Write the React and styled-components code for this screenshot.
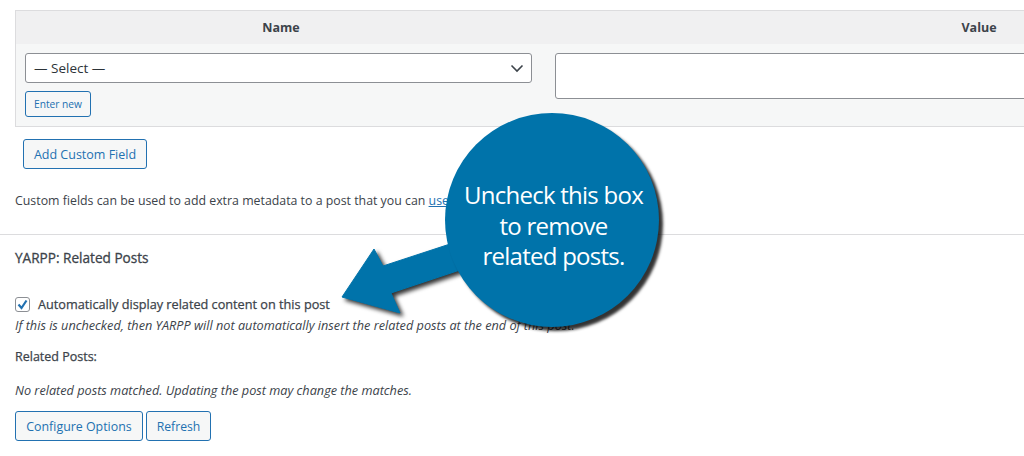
import React from "react";
import styled, { createGlobalStyle } from "styled-components";

const Global = createGlobalStyle`
  html, body { margin: 0; padding: 0; background: #fff; overflow: hidden; }
  body { font-family: "Open Sans", "Liberation Sans", sans-serif; font-size: 12.35px; color: #3c434a; }
`;
const Page = styled.div`
  position: relative; width: 1024px; height: 456px; overflow: hidden; padding-top: 10px; box-sizing: border-box;
`;
const FieldTable = styled.div`
  margin-left: 15px; width: 1400px; height: 117px; box-sizing: border-box; border: 1px solid #dcdcde;
  background: #f6f7f7; display: grid; grid-template-columns: 530px 866px; grid-template-rows: 33px 1fr;
`;
const HeadCell = styled.div`
  background: #f0f0f1; font-weight: 700; font-size: 12.5px; display: flex; align-items: center; justify-content: center; color: #3c434a;
`;
const BodyCell = styled.div`
  padding: 9px 0 0 9px; display: flex; flex-direction: column; align-items: flex-start; gap: 8px;
`;
const SelectBox = styled.div`
  width: 507px; height: 30px; box-sizing: border-box; border: 1px solid #8c8f94; border-radius: 3px; background: #fff;
  display: flex; align-items: center; justify-content: space-between; padding: 0 7px 0 8px; font-size: 13.5px; color: #2c3338;
`;
const ValueBox = styled.div`
  width: 700px; height: 46px; box-sizing: border-box; border: 1px solid #8c8f94; border-radius: 3px; background: #fff;
`;
const Button = styled.button`
  font: inherit; font-size: ${p => p.$fs}px; height: ${p => p.$small ? "26px" : "30px"};
  padding: 0; width: ${p => p.$w}px; box-sizing: border-box; border: 1px solid #2271b1; border-radius: 3px;
  background: #f6f7f7; color: #2271b1; display: flex; align-items: center; justify-content: center; flex: none;
`;
const AddRow = styled.div` margin: 12px 0 0 23px; `;
const Help = styled.p` margin: 23px 0 0 15px; line-height: 18px; `;
const Link = styled.a` color: #2271b1; text-decoration: underline; `;
const Divider = styled.div` height: 1px; background: #dcdcde; margin-top: 24px; `;
const Section = styled.section` padding: 14px 0 0 15px; `;
const Title = styled.h2` margin: 0; font-size: 13.6px; line-height: 18px; font-weight: 400; -webkit-text-stroke: 0.3px #3c434a; `;
const CheckRow = styled.label` display: flex; align-items: center; gap: 8px; margin-top: 28px; font-size: 12.7px; -webkit-text-stroke: 0.25px #3c434a; height: 18px; `;
const CheckBox = styled.span`
  width: 15px; height: 15px; box-sizing: border-box; border: 1px solid #8c8f94; border-radius: 3px; background: #fff;
  display: flex; align-items: center; justify-content: center;
`;
const Note = styled.p` margin: ${p => p.$mt}px 0 0; font-style: italic; font-size: 12.7px; line-height: 18px; `;
const Label = styled.p` margin: 14px 0 0; line-height: 18px; font-size: 12.5px; -webkit-text-stroke: 0.25px #3c434a; `;
const Buttons = styled.div` display: flex; gap: 3px; margin-top: 12px; `;
const Arrow = styled.svg`
  position: absolute; left: 330px; top: 235px; overflow: visible; filter: drop-shadow(3px 3px 2px rgba(0,0,0,.8));
`;
const Bubble = styled.div`
  position: absolute; left: 445px; top: 113px; width: 214px; height: 214px; border-radius: 50%; background: #0073aa;
  box-shadow: 4px 4px 3px rgba(0,0,0,.8); color: #fff; font-size: 24px; line-height: 30.5px; text-align: center;
  display: flex; align-items: center; justify-content: center; letter-spacing: -0.75px; padding: 12px 0 0 3px; box-sizing: border-box;
`;

export default function App() {
  return (
    <Page>
      <Global />
      <FieldTable>
        <HeadCell>Name</HeadCell>
        <HeadCell>Value</HeadCell>
        <BodyCell>
          <SelectBox>
            <span>— Select —</span>
            <svg width="14" height="14" viewBox="0 0 14 14" fill="none" stroke="#3c434a" strokeWidth="1.6"><path d="M1.5 4.5 7 10l5.5-5.5" /></svg>
          </SelectBox>
          <Button $small $w={66} $fs={10.2}>Enter new</Button>
        </BodyCell>
        <BodyCell>
          <ValueBox />
        </BodyCell>
      </FieldTable>
      <AddRow><Button $w={124} $fs={12.5}>Add Custom Field</Button></AddRow>
      <Help>Custom fields can be used to add extra metadata to a post that you can <Link>use in your theme</Link>.</Help>
      <Divider />
      <Section>
        <Title>YARPP: Related Posts</Title>
        <CheckRow>
          <CheckBox>
            <svg width="13" height="13" viewBox="0 0 13 13" fill="none" stroke="#2271b1" strokeWidth="2.2"><path d="M2.5 6.5 5.5 10 10.5 2.5" /></svg>
          </CheckBox>
          Automatically display related content on this post
        </CheckRow>
        <Note $mt={3}>If this is unchecked, then YARPP will not automatically insert the related posts at the end of this post.</Note>
        <Label>Related Posts:</Label>
        <Note $mt={15}>No related posts matched. Updating the post may change the matches.</Note>
        <Buttons>
          <Button $w={128} $fs={12.4}>Configure Options</Button>
          <Button $w={65} $fs={12.2}>Refresh</Button>
        </Buttons>
      </Section>
      <Arrow width="130" height="80" viewBox="330 235 130 80">
        <path d="M342 297 374 249 383 266 450 244 460 270 391 293 400 313Z" fill="#0073aa" stroke="#0073aa" strokeLinejoin="round" />
      </Arrow>
      <Bubble><span>Uncheck this box<br />to remove<br />related posts.</span></Bubble>
    </Page>
  );
}
